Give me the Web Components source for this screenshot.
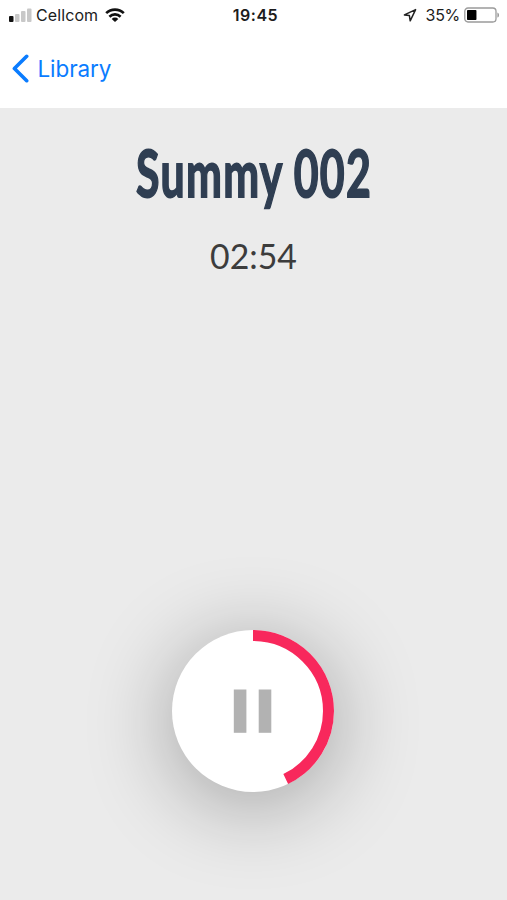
<!DOCTYPE html>
<html lang="en">
<head>
<meta charset="utf-8">
<meta name="viewport" content="width=device-width, initial-scale=1">
<title>Summy 002</title>
<style>
    html, body {
        height: 100%;
        margin: 0;
    }
    body {
        background: #fff;
        overflow: hidden;
        font-family: Inter, "Liberation Sans", sans-serif;
    }
</style>
</head>
<body>
<player-screen>
    <status-bar slot="top" carrier="Cellcom" time="19:45" battery="35"></status-bar>
    <nav-bar slot="top">Library</nav-bar>
    <track-info name="Summy 002">02:54</track-info>
    <play-button progress="0.4285"></play-button>
</player-screen>

<script>
/* Full height column: bars on top, grey player area below */
class PlayerScreen extends HTMLElement {
    constructor() {
        super();
        this.attachShadow({ mode: 'open' });
        this.shadowRoot.innerHTML = `
            <style>
                :host {
                    display: flex;
                    flex-direction: column;
                    height: 100vh;
                }
                header {
                    flex: none;
                    background: #fff;
                }
                main {
                    flex: 1;
                    display: flex;
                    flex-direction: column;
                    justify-content: space-between;
                    align-items: center;
                    box-sizing: border-box;
                    padding: 31px 1px 108px 0;
                    background: #ebebeb;
                    overflow: hidden;
                }
            </style>
            <header><slot name="top"></slot></header>
            <main><slot></slot></main>
        `;
    }
}

class StatusBar extends HTMLElement {
    constructor() {
        super();
        this.attachShadow({ mode: 'open' });
    }

    connectedCallback() {
        const level = Number(this.getAttribute('battery'));
        this.shadowRoot.innerHTML = `
            <style>
                :host {
                    display: grid;
                    grid-template-columns: 1fr auto 1fr;
                    align-items: center;
                    height: 30px;
                    padding: 0 7px 0 8px;
                    color: #1c1c1c;
                    font-size: 16px;
                    line-height: 30px;
                }
                svg { display: block; }
                .left, .right {
                    display: flex;
                    align-items: center;
                }
                .right { justify-content: flex-end; }
                .carrier { margin: 0 7px 0 4px; letter-spacing: 0.1px; }
                .time { padding-left: 3px; font-weight: 600; letter-spacing: 0.5px; }
                .percent { margin: 0 4px 0 9px; letter-spacing: -0.3px; }
            </style>
            <div class="left">
                <svg width="24" height="14" viewBox="0 0 24 14">
                    <rect x="1" y="8" width="4.5" height="6" rx="1" fill="#111"/>
                    <rect x="7" y="6" width="4.5" height="8" rx="1" fill="#c8c8c8"/>
                    <rect x="13" y="3" width="4.5" height="11" rx="1" fill="#c8c8c8"/>
                    <rect x="19" y="0.5" width="4.5" height="13.5" rx="1" fill="#c8c8c8"/>
                </svg>
                <span class="carrier">${this.getAttribute('carrier')}</span>
                <svg width="20" height="14" viewBox="0 0 20 14" fill="none" stroke="#111" stroke-width="2.6">
                    <path d="M1.2 5.2a12.5 12.5 0 0 1 17.6 0"/>
                    <path d="M4.4 8.7a8 8 0 0 1 11.2 0"/>
                    <path d="M10 14L6.7 10.9a4.7 4.7 0 0 1 6.6 0z" fill="#111" stroke="none"/>
                </svg>
            </div>
            <span class="time">${this.getAttribute('time')}</span>
            <div class="right">
                <svg width="14" height="14" viewBox="0 0 14 14" fill="none" stroke="#222" stroke-width="1.5" stroke-linejoin="round">
                    <path d="M12.6 1.6L1.4 6.9l5 .7.8 5.2z"/>
                </svg>
                <span class="percent">${level}%</span>
                <svg width="36" height="16" viewBox="0 0 36 16">
                    <rect x="0.8" y="1" width="31.2" height="14" rx="3.2" fill="#fff" stroke="#9b9b9b" stroke-width="1.3"/>
                    <rect x="3" y="3" width="${27 * level / 100}" height="10" rx="0.8" fill="#000"/>
                    <path d="M33.4 5.4c2.2.8 2.2 4.4 0 5.2z" fill="#9b9b9b"/>
                </svg>
            </div>
        `;
    }
}

class NavBar extends HTMLElement {
    constructor() {
        super();
        this.attachShadow({ mode: 'open' });
        this.shadowRoot.innerHTML = `
            <style>
                :host {
                    display: flex;
                    align-items: center;
                    gap: 8.5px;
                    height: 78.4px;
                    box-sizing: border-box;
                    padding: 0 0 2px 12px;
                    color: #0a7cff;
                    font-size: 22.5px;
                }
                svg { display: block; }
                span { letter-spacing: -0.1px; }
            </style>
            <svg width="17" height="29" viewBox="0 0 17 29" fill="none" stroke="currentColor" stroke-width="3.6" stroke-linecap="round" stroke-linejoin="round">
                <path d="M14.7 2.3L2.4 14.5 14.7 26.7"/>
            </svg>
            <span><slot></slot></span>
        `;
    }
}

/* Condensed track title with the elapsed time under it */
class TrackInfo extends HTMLElement {
    constructor() {
        super();
        this.attachShadow({ mode: 'open' });
    }

    connectedCallback() {
        this.shadowRoot.innerHTML = `
            <style>
                :host {
                    display: flex;
                    flex-direction: column;
                    align-items: center;
                }
                .name {
                    height: 80px;
                    margin-left: 3px;
                    color: #2f3e52;
                    font-family: Lato, "Open Sans", sans-serif;
                    font-size: 65px;
                    font-weight: 700;
                    line-height: 66px;
                    letter-spacing: 2px;
                    word-spacing: -1px;
                    white-space: nowrap;
                    -webkit-text-stroke: 1.8px #2f3e52;
                }
                .time {
                    margin: 15px 0 0 1px;
                    color: #3c3c3c;
                    font-family: Lato, sans-serif;
                    font-size: 33.8px;
                    line-height: 44px;
                }
            </style>
            <div class="name">${this.getAttribute('name')}</div>
            <div class="time"><slot></slot></div>
        `;
        this.condense(236);
    }

    // Squeeze the title horizontally to the given width
    condense(width) {
        const name = this.shadowRoot.querySelector('.name');
        name.style.transform = `scaleX(${width / name.offsetWidth})`;
    }
}

class PlayButton extends HTMLElement {
    constructor() {
        super();
        this.attachShadow({ mode: 'open' });
    }

    connectedCallback() {
        const progress = Number(this.getAttribute('progress')) * 100;
        this.shadowRoot.innerHTML = `
            <style>
                :host {
                    display: block;
                    width: 162px;
                    height: 162px;
                    border-radius: 50%;
                    background: #fff;
                    box-shadow: 0 12px 88px rgba(0, 0, 0, 0.33);
                }
                svg { display: block; }
            </style>
            <svg width="162" height="162" viewBox="0 0 162 162">
                <circle cx="81" cy="81" r="75.5" fill="none" stroke="#f8285c" stroke-width="11"
                    pathLength="100" stroke-dasharray="${progress} 100" transform="rotate(-90 81 81)"/>
                <rect x="61.8" y="59.5" width="12.6" height="43.3" fill="#b2b2b2"/>
                <rect x="86.7" y="59.5" width="12.6" height="43.3" fill="#b2b2b2"/>
            </svg>
        `;
    }
}

customElements.define('player-screen', PlayerScreen);
customElements.define('status-bar', StatusBar);
customElements.define('nav-bar', NavBar);
customElements.define('track-info', TrackInfo);
customElements.define('play-button', PlayButton);
</script>
</body>
</html>
